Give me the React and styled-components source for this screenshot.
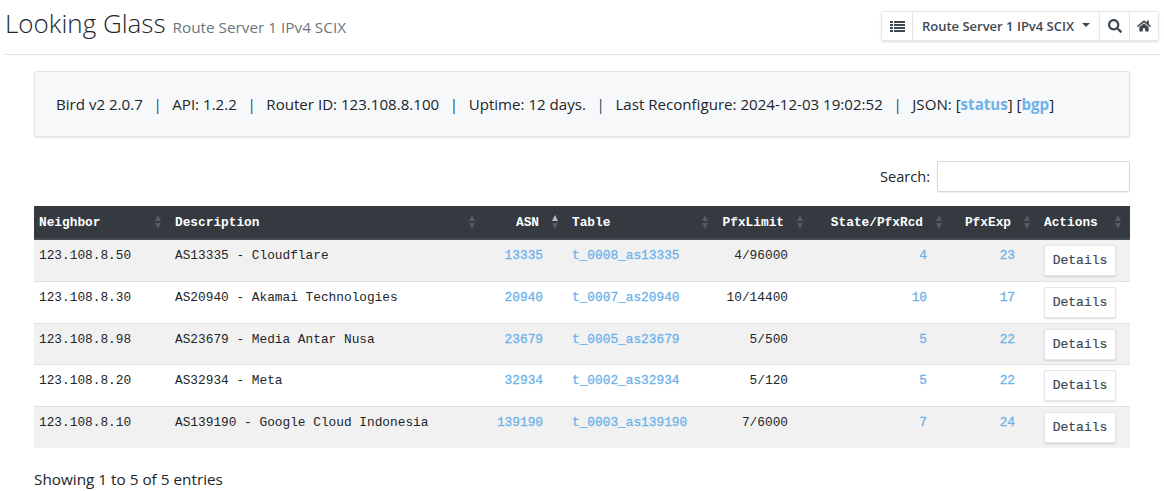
import React from "react";
import styled, { createGlobalStyle } from "styled-components";
import { FaSearch, FaHome } from "react-icons/fa";

const GlobalStyle = createGlobalStyle`
  body {
    margin: 0;
    background: #fff;
    color: #212529;
    font-family: "Open Sans", "Noto Sans", sans-serif;
    font-size: 14.4px;
  }
`;

const Page = styled.div`
  width: 1164px;
  height: 491px;
  overflow: hidden;
`;

const Header = styled.header`
  display: flex;
  align-items: flex-start;
  justify-content: space-between;
  height: 54px;
  margin: 0 4px 0 4px;
  border-bottom: 1px solid #dee2e6;
`;

const Title = styled.h1`
  display: flex;
  align-items: baseline;
  gap: 7px;
  margin: 5px 0 0 1px;
  font-size: 26px;
  line-height: 36px;
  font-weight: 300;
  color: #212529;
`;

const Subtitle = styled.small`
  font-size: 15.3px;
  font-weight: 400;
  color: #6c757d;
`;

const ButtonGroup = styled.div`
  display: flex;
  height: 30px;
  margin: 11px 1px 0 0;
  border: 1px solid #e3e6ea;
  border-radius: 3px;
  box-shadow: 0 1px 2px rgba(0, 0, 0, 0.15);
  box-sizing: border-box;
`;

const GroupButton = styled.button`
  display: flex;
  align-items: center;
  justify-content: center;
  gap: 8px;
  width: ${(p) => p.$width}px;
  padding: 0;
  border: 0;
  border-left: ${(p) => (p.$first ? "0" : "1px solid #e3e6ea")};
  background: #fff;
  color: #3d4852;
  font-family: inherit;
  font-size: 13px;
  font-weight: 600;
  box-sizing: border-box;
`;

const Caret = styled.span`
  width: 0;
  height: 0;
  margin-top: -2px;
  border-left: 4px solid transparent;
  border-right: 4px solid transparent;
  border-top: 4px solid #3d4852;
`;

const Content = styled.main`
  padding: 16px 34px 0 34px;
`;

const StatusPanel = styled.div`
  box-sizing: border-box;
  height: 66px;
  padding: 0 21px;
  display: flex;
  align-items: center;
  background: #f7f8fa;
  border: 1px solid #e1e4e8;
  border-radius: 2px;
  box-shadow: 0 1px 2px rgba(0, 0, 0, 0.1);
  font-size: 15.1px;
  white-space: pre;
`;

const Separator = styled.span`
  margin: 0 10.6px;
  color: #1f3f66;
`;

const StrongLink = styled.a`
  color: #6cb2eb;
  font-weight: 700;
`;

const SearchRow = styled.div`
  display: flex;
  align-items: center;
  justify-content: flex-end;
  gap: 7px;
  margin-top: 24px;
  height: 31px;
  font-size: 14.6px;
  line-height: 19px;
`;

const SearchInput = styled.input`
  box-sizing: border-box;
  width: 193px;
  height: 31px;
  border: 1px solid #d5d9de;
  border-radius: 2px;
  box-shadow: 0 1px 1px rgba(0, 0, 0, 0.08);
`;

const Table = styled.table`
  width: 1096px;
  margin-top: 14px;
  border-collapse: separate;
  border-spacing: 0;
  table-layout: fixed;
  font-family: "Liberation Mono", "DejaVu Sans Mono", monospace;
  font-size: 12.8px;
`;

const HeadCell = styled.th`
  position: relative;
  height: 34px;
  padding: 1px ${(p) => (p.$right ? 28 : 5)}px 0 5px;
  box-sizing: border-box;
  background: #343a40;
  border-bottom: 2px solid #454d55;
  color: #fff;
  font-weight: 700;
  text-align: ${(p) => (p.$right ? "right" : "left")};
`;

const SortArrows = styled.span`
  position: absolute;
  right: 9px;
  top: 9px;
  display: flex;
  flex-direction: column;
  gap: 2px;
  &::before,
  &::after {
    content: "";
    width: 0;
    height: 0;
    border-left: 3.5px solid transparent;
    border-right: 3.5px solid transparent;
  }
  &::before {
    border-bottom: 6px solid ${(p) => (p.$asc ? "#b8bdc2" : "#555b61")};
  }
  &::after {
    border-top: 6px solid #555b61;
  }
`;

const Row = styled.tr`
  background: ${(p) => (p.$odd ? "#f1f1f1" : "#fff")};
`;

const Cell = styled.td`
  height: ${(p) => p.$h}px;
  box-sizing: border-box;
  padding: 8px ${(p) => (p.$right ? 24 : 5)}px 0 5px;
  vertical-align: top;
  border-bottom: ${(p) => (p.$last ? "0" : "1px solid #dee2e6")};
  color: #212529;
  text-align: ${(p) => (p.$right ? "right" : "left")};
`;

const ActionCell = styled(Cell)`
  padding-top: 5px;
`;

const CellLink = styled.a`
  color: #6cb2eb;
  font-weight: 400;
  -webkit-text-stroke: 0.3px #6cb2eb;
`;

const DetailsButton = styled.button`
  display: block;
  box-sizing: border-box;
  width: 72px;
  height: 31px;
  padding: 0;
  border: 1px solid #e3e6ea;
  border-radius: 2px;
  background: #fff;
  box-shadow: 0 1px 2px rgba(0, 0, 0, 0.14);
  color: #3d4852;
  -webkit-text-stroke: 0.2px #3d4852;
  font-family: inherit;
  font-size: 13px;
`;

const Footer = styled.div`
  margin-top: 21px;
  font-size: 15.3px;
`;

const ListIcon = () => (
  <svg width="15" height="11" viewBox="0 0 15 11" fill="currentColor">
    {[0, 3, 6, 9].map((y) => (
      <g key={y}>
        <rect x="0" y={y} width="3" height="2" />
        <rect x="4" y={y} width="11" height="2" />
      </g>
    ))}
  </svg>
);

const columns = [
  { label: "Neighbor", width: 136 },
  { label: "Description", width: 314 },
  { label: "ASN", width: 83, right: true, asc: true },
  { label: "Table", width: 150 },
  { label: "PfxLimit", width: 95, right: true },
  { label: "State/PfxRcd", width: 139, right: true },
  { label: "PfxExp", width: 88, right: true },
  { label: "Actions", width: 91 },
];

const rows = [
  { ip: "123.108.8.50", desc: "AS13335 - Cloudflare", asn: "13335", table: "t_0008_as13335", limit: "4/96000", rcd: "4", exp: "23", h: 42 },
  { ip: "123.108.8.30", desc: "AS20940 - Akamai Technologies", asn: "20940", table: "t_0007_as20940", limit: "10/14400", rcd: "10", exp: "17", h: 42 },
  { ip: "123.108.8.98", desc: "AS23679 - Media Antar Nusa", asn: "23679", table: "t_0005_as23679", limit: "5/500", rcd: "5", exp: "22", h: 41 },
  { ip: "123.108.8.20", desc: "AS32934 - Meta", asn: "32934", table: "t_0002_as32934", limit: "5/120", rcd: "5", exp: "22", h: 42 },
  { ip: "123.108.8.10", desc: "AS139190 - Google Cloud Indonesia", asn: "139190", table: "t_0003_as139190", limit: "7/6000", rcd: "7", exp: "24", h: 41, last: true },
];

export default function App() {
  return (
    <Page>
      <GlobalStyle />
      <Header>
        <Title>
          Looking Glass <Subtitle>Route Server 1 IPv4 SCIX</Subtitle>
        </Title>
        <ButtonGroup>
          <GroupButton $first $width={30}>
            <ListIcon />
          </GroupButton>
          <GroupButton $width={187}>
            Route Server 1 IPv4 SCIX <Caret />
          </GroupButton>
          <GroupButton $width={30}>
            <FaSearch size={14} />
          </GroupButton>
          <GroupButton $width={29}>
            <FaHome size={14} />
          </GroupButton>
        </ButtonGroup>
      </Header>
      <Content>
        <StatusPanel>
          Bird v2 2.0.7<Separator>|</Separator>API: 1.2.2<Separator>|</Separator>
          Router ID: 123.108.8.100<Separator>|</Separator>Uptime: 12 days.
          <Separator>|</Separator>Last Reconfigure: 2024-12-03 19:02:52
          <Separator>|</Separator>JSON: [<StrongLink>status</StrongLink>] [
          <StrongLink>bgp</StrongLink>]
        </StatusPanel>
        <SearchRow>
          Search: <SearchInput />
        </SearchRow>
        <Table>
          <colgroup>
            {columns.map((c) => (
              <col key={c.label} style={{ width: c.width }} />
            ))}
          </colgroup>
          <thead>
            <tr>
              {columns.map((c) => (
                <HeadCell key={c.label} $right={c.right}>
                  {c.label}
                  <SortArrows $asc={c.asc} />
                </HeadCell>
              ))}
            </tr>
          </thead>
          <tbody>
            {rows.map((r, i) => (
              <Row key={r.ip} $odd={i % 2 === 0}>
                <Cell $h={r.h} $last={r.last}>{r.ip}</Cell>
                <Cell $h={r.h} $last={r.last}>{r.desc}</Cell>
                <Cell $h={r.h} $last={r.last} $right>
                  <CellLink>{r.asn}</CellLink>
                </Cell>
                <Cell $h={r.h} $last={r.last}>
                  <CellLink>{r.table}</CellLink>
                </Cell>
                <Cell $h={r.h} $last={r.last} $right>
                  {r.limit}
                </Cell>
                <Cell $h={r.h} $last={r.last} $right>
                  <CellLink>{r.rcd}</CellLink>
                </Cell>
                <Cell $h={r.h} $last={r.last} $right>
                  <CellLink>{r.exp}</CellLink>
                </Cell>
                <ActionCell $h={r.h} $last={r.last}>
                  <DetailsButton>Details</DetailsButton>
                </ActionCell>
              </Row>
            ))}
          </tbody>
        </Table>
        <Footer>Showing 1 to 5 of 5 entries</Footer>
      </Content>
    </Page>
  );
}
